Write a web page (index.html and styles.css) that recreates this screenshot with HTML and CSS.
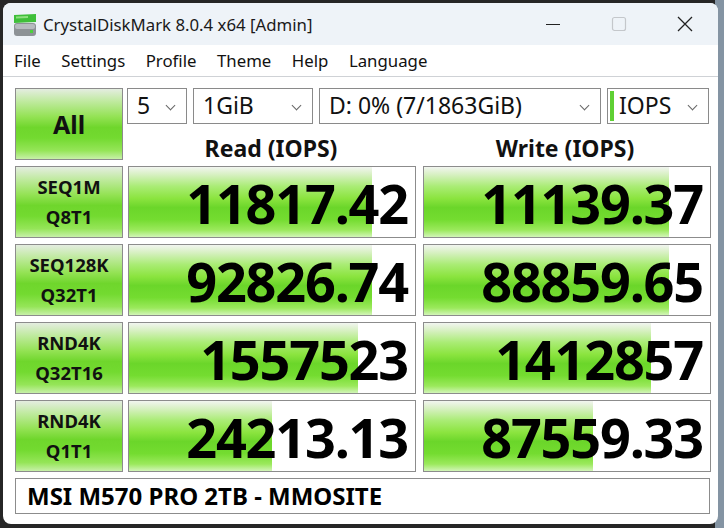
FILE: index.html
```html
<!DOCTYPE html>
<html lang="en">
<head>
    <meta charset="UTF-8">
    <meta name="viewport" content="width=device-width, initial-scale=1.0">
    <title>CrystalDiskMark</title>
    <link rel="stylesheet" href="styles.css">
</head>
<body>
    <div class="window">
        <!-- Title bar -->
        <div class="titlebar">
            <svg class="app-icon" width="24" height="24" viewBox="0 0 24 24">
                <path d="M1 2 L23 1 L23 9 L1 10 Z" fill="#3fbf3a"/>
                <path d="M3 3.5 L15 3 L15 5 L3 5.5 Z" fill="#8ee07f"/>
                <rect x="1" y="10" width="22" height="13" rx="3" fill="#8d9296"/>
                <rect x="2" y="11" width="20" height="5" rx="2" fill="#b6bbbf"/>
                <rect x="17" y="17" width="3" height="3" fill="#4cd13d"/>
            </svg>
            <span class="title">CrystalDiskMark 8.0.4 x64 [Admin]</span>
            <div class="controls">
                <span class="ctl">
                    <svg width="18" height="18" viewBox="0 0 18 18"><path d="M2 9.5 H16" stroke="#222" stroke-width="1.2"/></svg>
                </span>
                <span class="ctl">
                    <svg width="18" height="18" viewBox="0 0 18 18"><rect x="2.5" y="2.5" width="13" height="13" rx="2" fill="none" stroke="#c4c7cb" stroke-width="1.2"/></svg>
                </span>
                <span class="ctl">
                    <svg width="18" height="18" viewBox="0 0 18 18"><path d="M2 2 L16 16 M16 2 L2 16" stroke="#222" stroke-width="1.3"/></svg>
                </span>
            </div>
        </div>

        <!-- Menu bar -->
        <div class="menubar">
            <span>File</span>
            <span>Settings</span>
            <span>Profile</span>
            <span>Theme</span>
            <span>Help</span>
            <span>Language</span>
        </div>

        <!-- Benchmark panel -->
        <div class="panel">
            <div class="top">
                <div class="label big">All</div>
                <div class="top-right">
                    <div class="selects">
                        <div class="select s-count">5<span class="chev"></span></div>
                        <div class="select s-size">1GiB<span class="chev"></span></div>
                        <div class="select s-drive">D: 0% (7/1863GiB)<span class="chev"></span></div>
                        <div class="select s-unit"><span class="mark"></span>IOPS<span class="chev"></span></div>
                    </div>
                    <div class="heads">
                        <div class="head">Read (IOPS)</div>
                        <div class="head">Write (IOPS)</div>
                    </div>
                </div>
            </div>

            <div class="row">
                <div class="label">SEQ1M<br>Q8T1</div>
                <div class="meter"><div class="bar" style="width: 85%"></div><span class="val">11817.42</span></div>
                <div class="meter"><div class="bar" style="width: 85.5%"></div><span class="val">11139.37</span></div>
            </div>
            <div class="row">
                <div class="label">SEQ128K<br>Q32T1</div>
                <div class="meter"><div class="bar" style="width: 85%"></div><span class="val">92826.74</span></div>
                <div class="meter"><div class="bar" style="width: 85.5%"></div><span class="val">88859.65</span></div>
            </div>
            <div class="row">
                <div class="label">RND4K<br>Q32T16</div>
                <div class="meter"><div class="bar" style="width: 80%"></div><span class="val">1557523</span></div>
                <div class="meter"><div class="bar" style="width: 79.5%"></div><span class="val">1412857</span></div>
            </div>
            <div class="row">
                <div class="label">RND4K<br>Q1T1</div>
                <div class="meter"><div class="bar" style="width: 50%"></div><span class="val">24213.13</span></div>
                <div class="meter"><div class="bar" style="width: 59%"></div><span class="val">87559.33</span></div>
            </div>

            <div class="name">MSI M570 PRO 2TB - MMOSITE</div>
        </div>
    </div>
</body>
</html>
```

FILE: styles.css
```css
/* Desktop behind the window */
body {
    margin: 0;
    background: linear-gradient(to right, #262626 0, #262626 715px, #8494a3 715px);
    font-family: "Noto Sans", "Open Sans", sans-serif;
    height: 528px;
    overflow: hidden;
}

/* Application window */
.window {
    margin: 3px 0 0 3px;
    width: 715px;
    height: 521px;
    background-color: #fff;
    border-radius: 8px;
    overflow: hidden;
}

/* Title bar */
.titlebar {
    height: 42px;
    background-color: #eef3f8;
    display: flex;
    align-items: center;
}

.app-icon {
    margin-left: 10px;
    margin-top: 1px;
}

.title {
    margin-left: 6px;
    font-size: 16.8px;
    color: #1a1a1a;
}

.controls {
    margin-left: auto;
    display: flex;
}

.ctl {
    width: 66px;
    height: 42px;
    display: flex;
    justify-content: center;
    align-items: center;
}

/* Menu bar */
.menubar {
    height: 31px;
    border-bottom: 1px solid #cfd2d6;
    display: flex;
    align-items: center;
    gap: 20.5px;
    padding-left: 11px;
    font-size: 16.8px;
    color: #111;
}

/* Benchmark panel */
.panel {
    padding: 11px 0 0 12px;
    display: flex;
    flex-direction: column;
    gap: 6px;
}

.top {
    display: flex;
    gap: 5px;
    height: 72px;
}

.top-right {
    display: flex;
    flex-direction: column;
}

.selects {
    display: flex;
    gap: 6px;
}

.select {
    height: 36px;
    box-sizing: border-box;
    border: 1px solid #8a8a8a;
    background: #fff;
    position: relative;
    font-size: 23px;
    line-height: 33px;
    padding-left: 9px;
    color: #111;
}

.s-count { width: 60px; }
.s-size { width: 120px; }
.s-drive { width: 282px; }
.s-unit { width: 102px; padding-left: 2px; display: flex; }

.mark {
    width: 4px;
    height: 30px;
    margin-top: 2px;
    margin-right: 5px;
    background-color: #5fd034;
}

/* Small dropdown chevron */
.chev {
    position: absolute;
    right: 12px;
    top: 13px;
    width: 6px;
    height: 6px;
    border-right: 1px solid #666;
    border-bottom: 1px solid #666;
    transform: rotate(45deg);
}

.heads {
    display: flex;
    gap: 6px;
    flex: 1;
}

.head {
    width: 288px;
    text-align: center;
    font-weight: bold;
    font-size: 23px;
    padding-top: 8px;
    color: #111;
}

/* Rows of results */
.row {
    display: flex;
    gap: 6px;
    height: 72px;
}

.label {
    width: 108px;
    flex: none;
    box-sizing: border-box;
    border: 1px solid #8c8c8c;
    background: linear-gradient(to bottom, #e4ede0 0%, #bfea9e 18%, #93e253 40%, #6fd62c 55%, #73da30 70%, #95e558 88%, #c7f0a8 100%);
    display: flex;
    align-items: center;
    justify-content: center;
    text-align: center;
    font-weight: bold;
    font-size: 18.5px;
    line-height: 30px;
    color: #111;
    margin-right: -1px;
}

.big {
    font-size: 25px;
}

.meter {
    width: 288px;
    box-sizing: border-box;
    border: 1px solid #8c8c8c;
    background: #fff;
    position: relative;
    display: flex;
    align-items: center;
    justify-content: flex-end;
}

.meter:last-child {
    margin-left: 1px;
}

.bar {
    position: absolute;
    left: 0;
    top: 0;
    bottom: 0;
    background: linear-gradient(to bottom, #f2f5f0 0%, #d4f0bd 12%, #a9ec74 28%, #8be43f 45%, #6bd62a 58%, #74dc30 75%, #9be95c 90%, #d2f5b8 100%);
}

.val {
    position: relative;
    font-weight: bold;
    font-size: 54px;
    letter-spacing: -1.2px;
    padding-right: 7px;
    line-height: 1;
    color: #000;
    margin-top: 2px;
}

/* Drive name */
.name {
    width: 695px;
    height: 36px;
    box-sizing: border-box;
    border: 1px solid #8c8c8c;
    font-weight: bold;
    font-size: 24px;
    line-height: 33px;
    padding-left: 11px;
    color: #000;
}
```
